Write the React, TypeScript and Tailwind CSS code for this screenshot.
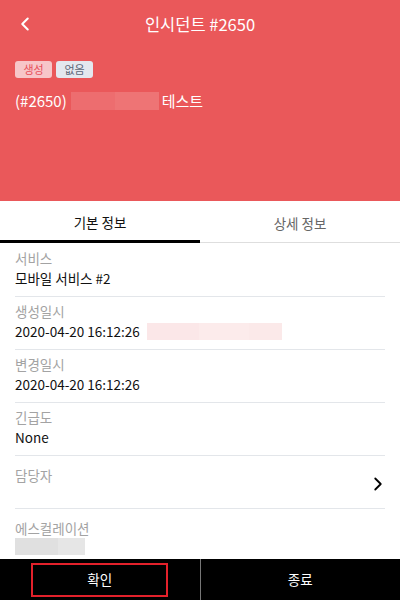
import { ChevronLeft, ChevronRight } from "lucide-react";

const font = { fontFamily: '"Noto Sans CJK KR", "Noto Sans", sans-serif' };

function Row({ label, children, last = false }: { label: string; children?: React.ReactNode; last?: boolean }) {
  return (
    <div className={`mx-[15px] pt-[4px] pb-[8px] ${last ? "" : "border-b border-[#e3e6ea]"}`}>
      <div className="text-[13.5px] leading-[20px] text-[#a3a3a3]">{label}</div>
      <div className="text-[13.5px] leading-[20px] text-[#111]">{children}</div>
    </div>
  );
}

export default function App() {
  return (
    <div className="w-[400px] h-[600px] flex flex-col bg-white overflow-hidden" style={font}>
      <div className="h-[201px] bg-[#ea585a] text-white shrink-0">
        <div className="h-[48px] relative flex items-center justify-center">
          <ChevronLeft className="absolute left-[14px] top-[13px]" size={22} strokeWidth={2.2} />
          <span className="text-[16.5px]">인시던트 #2650</span>
        </div>
        <div className="px-[15px] pt-[13px] flex gap-[4px]">
          <span className="h-[17px] w-[37px] rounded-[3px] bg-[#f7c6c9] text-[#e84f5a] text-[11px] leading-[17px] text-center">생성</span>
          <span className="h-[17px] w-[37px] rounded-[3px] bg-[#e4e8ef] text-[#5b6577] text-[11px] leading-[17px] text-center">없음</span>
        </div>
        <div className="px-[15px] pt-[13px] flex items-center text-[15px] leading-[20px]">
          <span>(#2650)</span>
          <span className="ml-[4px] h-[18px] w-[44px] bg-[#ed6d6f]" />
          <span className="h-[18px] w-[44px] bg-[#ee7475]" />
          <span className="ml-[3px]">테스트</span>
        </div>
      </div>
      <div className="flex h-[42px] shrink-0 border-b border-[#dedede] text-[13.5px]">
        <div className="flex-1 flex items-center justify-center text-[#111] border-b-[3px] border-black -mb-[1px] pt-[3px]">기본 정보</div>
        <div className="flex-1 flex items-center justify-center text-[#666] pt-[3px]">상세 정보</div>
      </div>
      <div className="flex-1 overflow-hidden pt-[1px]">
        <Row label="서비스">모바일 서비스 #2</Row>
        <Row label="생성일시">
          <div className="flex items-center">
            <span>2020-04-20 16:12:26</span>
            <span className="ml-[7px] h-[17px] w-[52px] bg-[#fbe7e8]" />
            <span className="h-[17px] w-[50px] bg-[#fcebeb]" />
            <span className="h-[17px] w-[33px] bg-[#fbe9e9]" />
          </div>
        </Row>
        <Row label="변경일시">2020-04-20 16:12:26</Row>
        <Row label="긴급도">None</Row>
        <div className="mx-[15px] h-[53px] border-b border-[#e3e6ea] flex justify-between">
          <div className="text-[13.5px] leading-[20px] text-[#a3a3a3] pt-[9px]">담당자</div>
          <ChevronRight className="mt-[17px] -mr-[4px] text-black" size={22} strokeWidth={2} />
        </div>
        <div className="mx-[15px] pt-[9px]">
          <div className="text-[13.5px] leading-[20px] text-[#a3a3a3]">에스컬레이션</div>
          <div className="flex">
            <span className="h-[17px] w-[43px] bg-[#e0e0e0]" />
            <span className="h-[17px] w-[27px] bg-[#e6e6e6]" />
          </div>
        </div>
      </div>
      <div className="h-[41px] shrink-0 bg-black flex text-white text-[13.5px]">
        <div className="flex-1 flex items-center justify-center border-r border-[#777]">
          <div className="w-[137px] h-[34px] border-2 border-[#e3212b] flex items-center justify-center">확인</div>
        </div>
        <div className="flex-1 flex items-center justify-center">종료</div>
      </div>
    </div>
  );
}
